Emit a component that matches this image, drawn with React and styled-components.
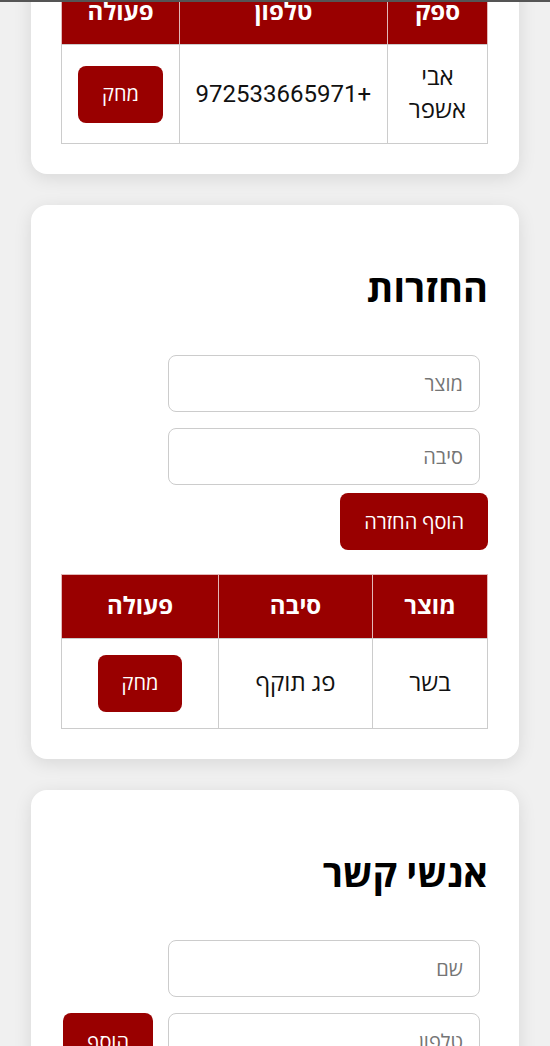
import React from "react";
import styled, { createGlobalStyle } from "styled-components";

const GlobalStyle = createGlobalStyle`
  * { box-sizing: border-box; }
  body {
    margin: 0;
    background: #f0f0f0;
    direction: rtl;
    font-family: Roboto, "Open Sans", "DejaVu Sans", sans-serif;
    color: #111;
  }
`;

const suppliers = [{ id: 1, name: "אבי אשפר", phone: "+972533665971" }];
const returnsList = [{ id: 1, product: "בשר", reason: "פג תוקף" }];

export default function App() {
  return (
    <>
      <GlobalStyle />
      <Viewport>
        <Stack>
          <Card>
            <DataTable
              cols={[100, 208, 118]}
              head={["ספק", "טלפון", "פעולה"]}
              rows={suppliers.map((s) => [s.name, s.phone])}
            />
          </Card>

          <Card>
            <Title>החזרות</Title>
            <Form>
              <Input placeholder="מוצר" />
              <Input placeholder="סיבה" />
              <Button>הוסף החזרה</Button>
            </Form>
            <DataTable
              cols={[115, 154, 157]}
              head={["מוצר", "סיבה", "פעולה"]}
              rows={returnsList.map((r) => [r.product, r.reason])}
            />
          </Card>

          <Card>
            <Title>אנשי קשר</Title>
            <Form>
              <Input placeholder="שם" />
              <Input placeholder="טלפון" />
              <Button>הוסף</Button>
            </Form>
          </Card>
        </Stack>
      </Viewport>
    </>
  );
}

function DataTable({ cols, head, rows }) {
  return (
    <Table>
      <colgroup>
        {cols.map((w, i) => (
          <Col key={i} $w={w} />
        ))}
      </colgroup>
      <thead>
        <tr>
          {head.map((h) => (
            <Th key={h}>{h}</Th>
          ))}
        </tr>
      </thead>
      <tbody>
        {rows.map((row, i) => (
          <tr key={i}>
            {row.map((cell, j) => (
              <Td key={j}>{cell}</Td>
            ))}
            <Td>
              <Button>מחק</Button>
            </Td>
          </tr>
        ))}
      </tbody>
    </Table>
  );
}

const Viewport = styled.div`
  min-height: 100vh;
  overflow: hidden;
  border-top: 2px solid #555;
`;

const Stack = styled.div`
  display: flex;
  flex-direction: column;
  gap: 31px;
  margin-top: -54px;
  padding: 0 31px 40px;
`;

const Card = styled.section`
  background: #fff;
  border-radius: 16px;
  padding: 32px 31px 30px;
  box-shadow: 0 4px 18px rgba(0, 0, 0, 0.1);
`;

const Title = styled.h2`
  margin: 30px 0 36px;
  font-size: 38px;
  line-height: 44px;
  font-weight: 700;
  color: #000;
`;

const Form = styled.div`
  display: flex;
  flex-wrap: wrap;
  align-items: center;
  column-gap: 7px;
  margin-bottom: 24px;
`;

const Input = styled.input`
  width: 312px;
  height: 57px;
  margin: 8px;
  padding: 0 16px;
  border: 1px solid #ccc;
  border-radius: 8px;
  font: inherit;
  font-size: 20px;
  color: #222;
  background: #fff;
  &::placeholder {
    color: #757575;
  }
`;

const Button = styled.button`
  height: 57px;
  padding: 0 24px;
  border: none;
  border-radius: 8px;
  background: #990000;
  color: #fff;
  font: inherit;
  font-size: 20px;
  cursor: pointer;
`;

const Table = styled.table`
  width: 100%;
  table-layout: fixed;
  border-collapse: collapse;
  font-size: 24px;
`;

const Col = styled.col`
  width: ${(p) => p.$w}px;
`;

const Th = styled.th`
  height: 64px;
  padding: 0 16px;
  line-height: 31px;
  background: #990000;
  color: #fff;
  font-weight: 700;
  border: 1px solid #e2b8b8;
  border-bottom-color: #ccc;
  text-align: center;
`;

const Td = styled.td`
  padding: 16px;
  line-height: 33px;
  border: 1px solid #ccc;
  text-align: center;
  vertical-align: middle;
`;
